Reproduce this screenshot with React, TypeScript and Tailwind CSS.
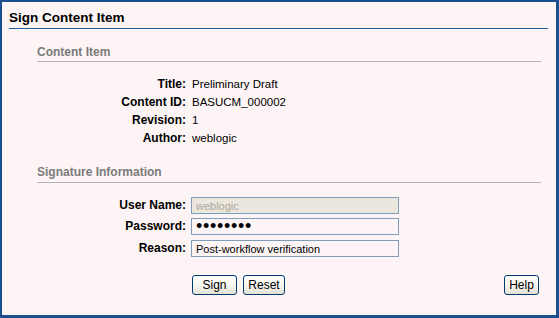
import React from 'react';

const info = [
  { label: 'Title:', value: 'Preliminary Draft' },
  { label: 'Content ID:', value: 'BASUCM_000002' },
  { label: 'Revision:', value: '1' },
  { label: 'Author:', value: 'weblogic' },
];

function SectionHeader({ children, className }: { children: React.ReactNode; className: string }) {
  return (
    <div className={`ml-[35px] mr-[15px] h-[17px] border-b border-[#b4b4b4] text-[12px] leading-[14px] font-bold text-[#7b7b7b] ${className}`}>
      {children}
    </div>
  );
}

function XpButton({ children, className }: { children: React.ReactNode; className: string }) {
  return (
    <button
      type="button"
      className={`h-[20px] rounded-[3px] border border-[#003c74] bg-linear-to-b from-white via-[#f7f6f1] to-[#e3e0d3] text-[12px] leading-[16px] text-black ${className}`}
    >
      {children}
    </button>
  );
}

export default function App() {
  return (
    <div
      className="w-[559px] h-[318px] overflow-hidden bg-[#fdf5f5] border-t-2 border-l-2 border-r-[3px] border-b-[3px] border-[#1d4e8f]"
      style={{ fontFamily: '"Liberation Sans", Arial, sans-serif' }}
    >
      {/* Page title */}
      <div className="ml-[7px] mr-[8px] pt-[8px] pb-[2px] border-b border-[#225e9e]">
        <h1 className="text-[13.5px] leading-[16px] font-bold text-black">Sign Content Item</h1>
      </div>

      <SectionHeader className="mt-[16px]">Content Item</SectionHeader>

      <div className="mt-[13px]">
        {info.map(({ label, value }) => (
          <div key={label} className="flex items-baseline h-[18px] leading-[18px]">
            <span className="w-[184px] shrink-0 text-right text-[12px] font-bold text-black">{label}</span>
            <span className="ml-[6px] text-[11.5px] text-black">{value}</span>
          </div>
        ))}
      </div>

      <SectionHeader className="mt-[18px] pb-[3px] h-[18px]">Signature Information</SectionHeader>

      <div className="mt-[14px] flex items-center h-[17px]">
        <span className="w-[184px] shrink-0 text-right text-[12px] font-bold leading-[17px]">User Name:</span>
        <input
          disabled
          value="weblogic"
          readOnly
          className="ml-[5px] w-[208px] h-[17px] border border-[#7f9db9] bg-[#ebe6de] px-[4px] text-[11px] text-[#aca899] outline-none"
        />
      </div>
      <div className="mt-[4px] flex items-center h-[17px]">
        <span className="w-[184px] shrink-0 text-right text-[12px] font-bold leading-[17px]">Password:</span>
        <input
          type="password"
          value="weblogic"
          readOnly
          className="ml-[5px] w-[208px] h-[17px] border border-[#7f9db9] bg-transparent px-[4px] text-[18px] leading-[15px] tracking-[0.7px] text-black outline-none"
        />
      </div>
      <div className="mt-[5px] flex items-center h-[17px]">
        <span className="w-[184px] shrink-0 text-right text-[12px] font-bold leading-[17px]">Reason:</span>
        <input
          value="Post-workflow verification"
          readOnly
          className="ml-[5px] w-[208px] h-[17px] border border-[#7f9db9] bg-transparent px-[4px] text-[11px] text-black outline-none"
        />
      </div>

      <div className="mt-[18px] flex items-center">
        <XpButton className="ml-[190px] w-[45px]">Sign</XpButton>
        <XpButton className="ml-[6px] w-[42px]">Reset</XpButton>
        <XpButton className="ml-auto mr-[17px] w-[35px]">Help</XpButton>
      </div>
    </div>
  );
}
